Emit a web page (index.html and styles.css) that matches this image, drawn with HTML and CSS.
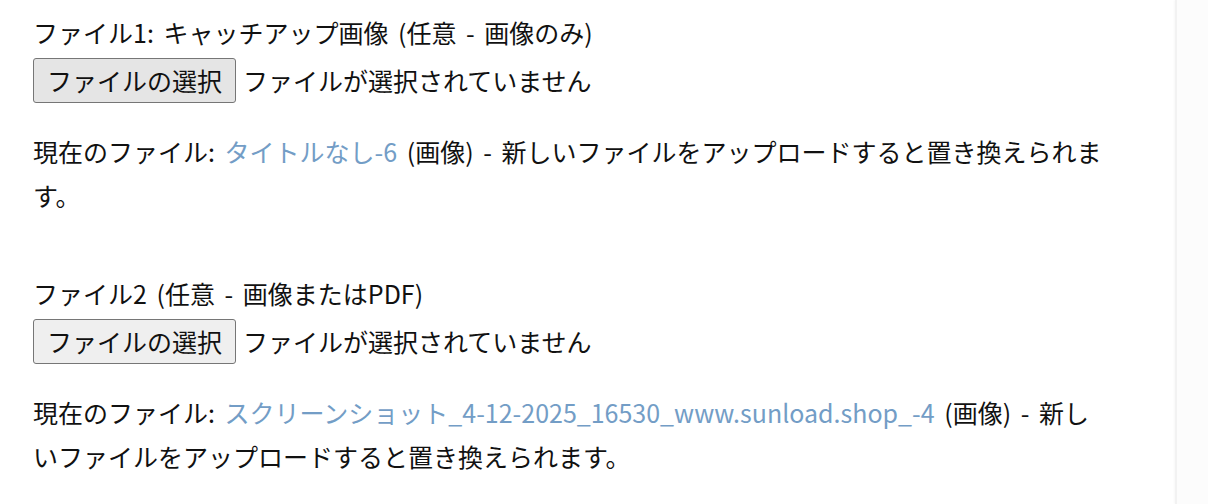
FILE: index.html
```html
<!DOCTYPE html>
<html lang="ja">
<head>
<meta charset="utf-8">
<title>ファイル</title>
<link rel="stylesheet" href="styles.css">
</head>
<body>
<div class="layout">
  <main class="main">
    <div class="field">
      <div class="label">ファイル1: キャッチアップ画像 (任意 - 画像のみ)</div>
      <div class="picker">
        <button class="btn btn-hover" type="button">ファイルの選択</button>
        <span class="status">ファイルが選択されていません</span>
      </div>
      <p class="current">現在のファイル: <a class="link" href="#">タイトルなし-6</a> (画像) - 新しいファイルをアップロードすると置き換えられます。</p>
    </div>
    <div class="field field-next">
      <div class="label">ファイル2 (任意 - 画像またはPDF)</div>
      <div class="picker">
        <button class="btn" type="button">ファイルの選択</button>
        <span class="status">ファイルが選択されていません</span>
      </div>
      <p class="current">現在のファイル: <a class="link" href="#">スクリーンショット_4-12-2025_16530_www.sunload.shop_-4</a> (画像) - 新しいファイルをアップロードすると置き換えられます。</p>
    </div>
  </main>
  <aside class="side"></aside>
</div>
</body>
</html>
```
FILE: styles.css
```css
html, body {
  margin: 0;
  padding: 0;
  background: #ffffff;
}
body {
  font-family: "Noto Sans CJK JP", "Noto Sans", sans-serif;
  font-size: 25px;
  color: #111111;
  word-spacing: 4px;
  height: 504px;
  overflow: hidden;
}
.layout {
  display: flex;
  height: 504px;
}
.main {
  flex: 1;
  padding: 15px 67px 0 33px;
}
.side {
  width: 31px;
  background: #fcfcfc;
  border-left: 2px solid #f2f2f2;
  box-shadow: -1px 0 2px rgba(0, 0, 0, 0.03);
}
.field-next {
  margin-top: 59px;
}
.label {
  line-height: 34px;
}
.picker {
  display: flex;
  align-items: center;
  gap: 7px;
  margin-top: 9px;
}
.btn {
  font-family: inherit;
  font-size: 25px;
  color: #111;
  line-height: 35px;
  padding: 4px 13px;
  height: 45px;
  border: 1px solid #767676;
  border-radius: 3px;
  background: #efefef;
  box-sizing: border-box;
  width: 203px;
  white-space: nowrap;
}
.btn-hover {
  background: #e5e5e5;
}
.status {
  line-height: 35px;
}
.current {
  margin: 26px 0 0;
  line-height: 44px;
}
.link {
  color: #739dc6;
  text-decoration: none;
}
```
